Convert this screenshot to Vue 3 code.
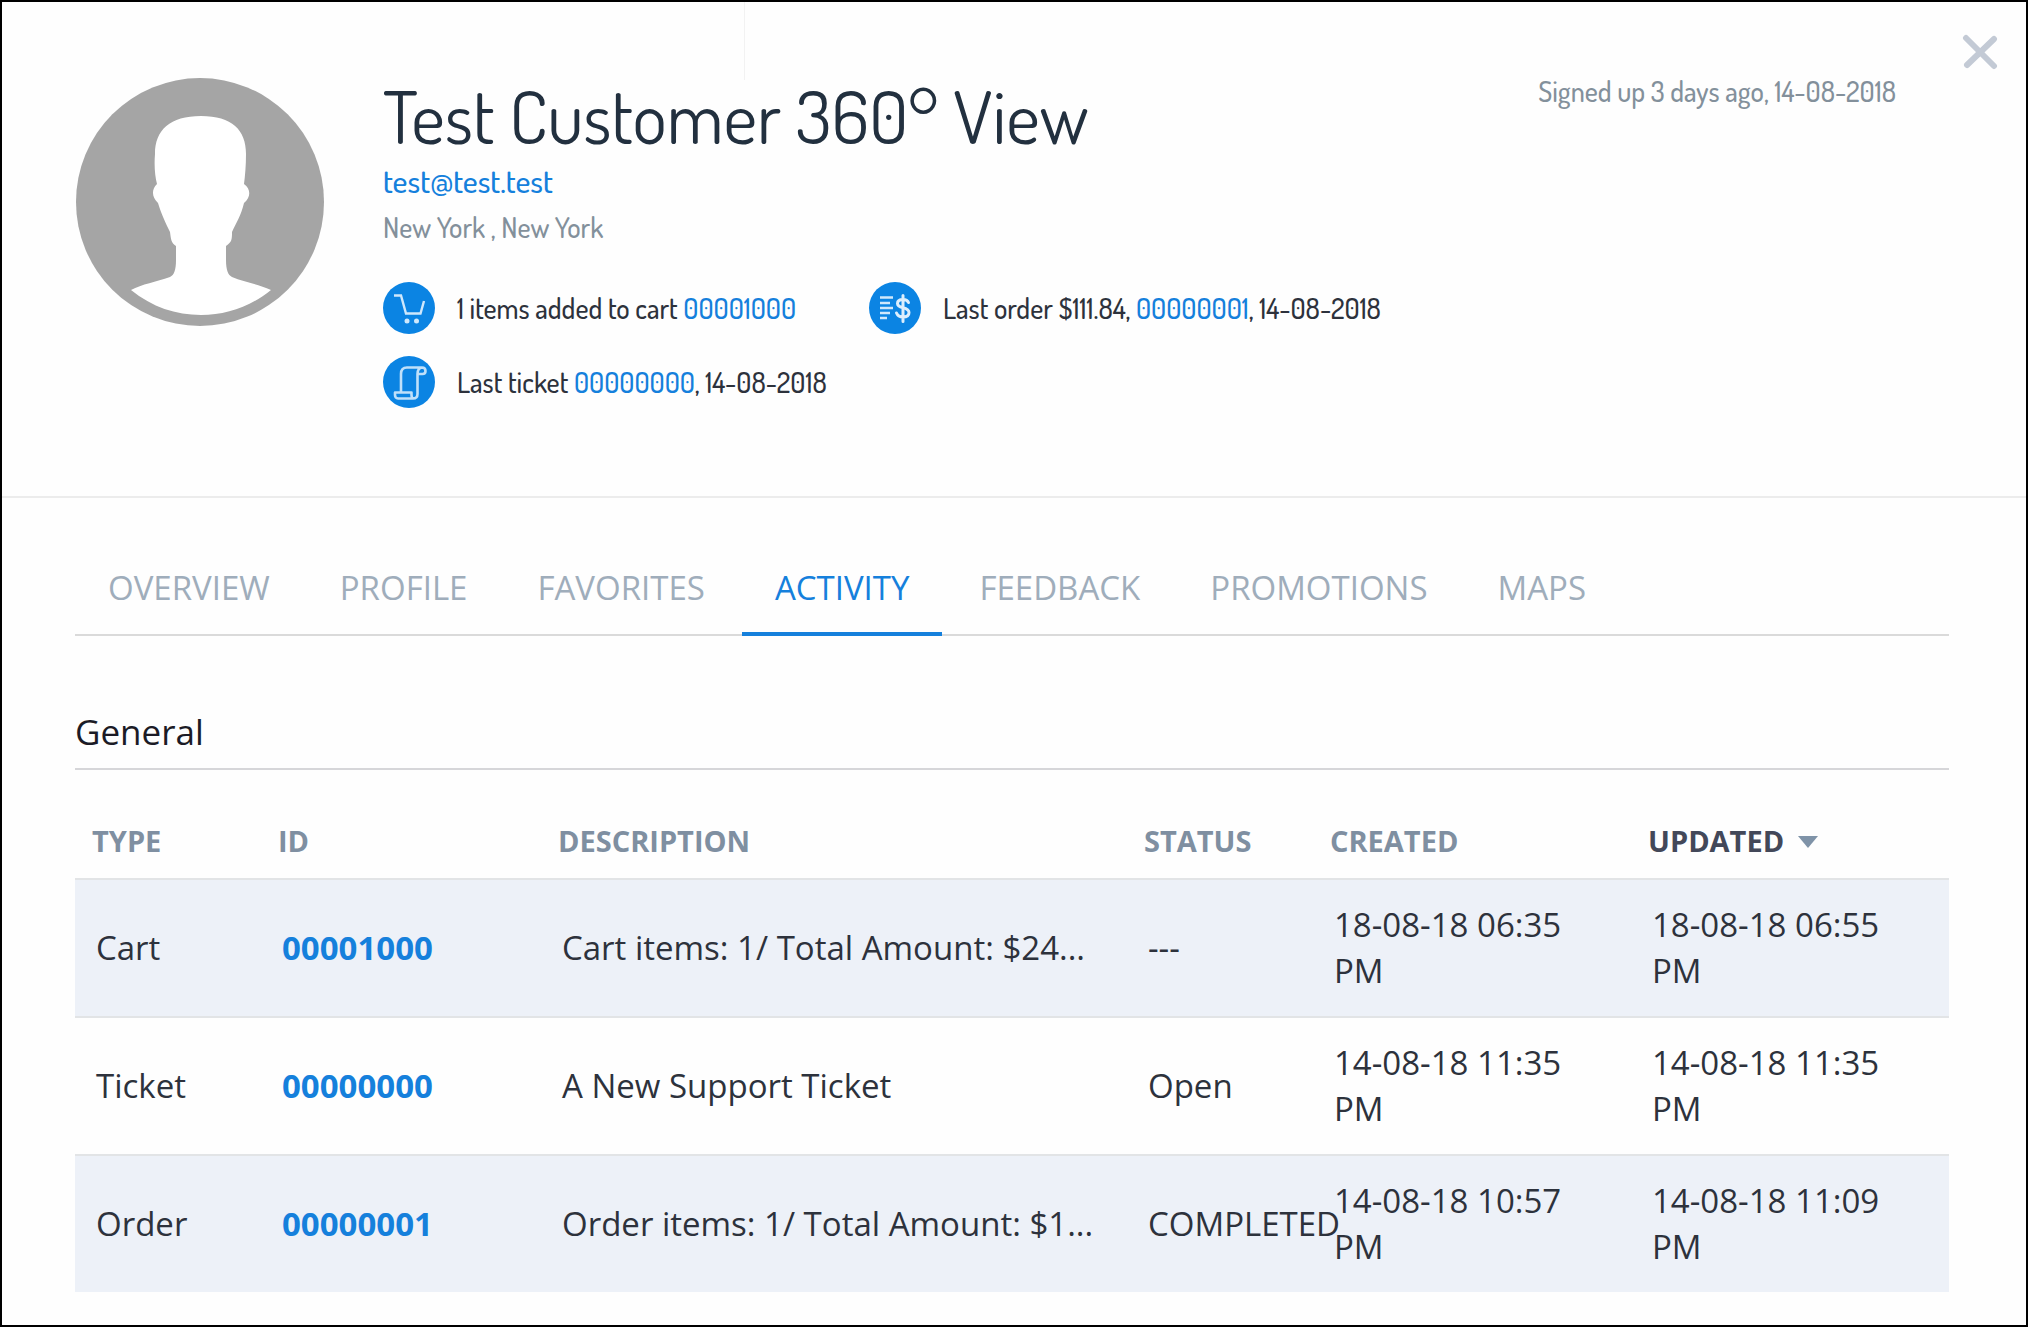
<script setup>
import { ref } from 'vue'

const tabs = ['Overview', 'Profile', 'Favorites', 'Activity', 'Feedback', 'Promotions', 'Maps']
const activeTab = ref('Activity')

const columns = [
  { key: 'type', label: 'Type' },
  { key: 'id', label: 'ID' },
  { key: 'description', label: 'Description' },
  { key: 'status', label: 'Status' },
  { key: 'created', label: 'Created' },
  { key: 'updated', label: 'Updated', sorted: true },
]

const rows = [
  { type: 'Cart', id: '00001000', description: 'Cart items: 1/ Total Amount: $24...', status: '---', created: '18-08-18 06:35 PM', updated: '18-08-18 06:55 PM' },
  { type: 'Ticket', id: '00000000', description: 'A New Support Ticket', status: 'Open', created: '14-08-18 11:35 PM', updated: '14-08-18 11:35 PM' },
  { type: 'Order', id: '00000001', description: 'Order items: 1/ Total Amount: $1...', status: 'COMPLETED', created: '14-08-18 10:57 PM', updated: '14-08-18 11:09 PM' },
]
</script>

<template>
  <main class="dialog">
    <button class="close" type="button" aria-label="Close">
      <svg viewBox="0 0 36 36" width="36" height="36" aria-hidden="true">
        <path d="M4 4 32 32M32 5 5 31" fill="none" stroke="#c3cad5" stroke-width="6" stroke-linecap="round" />
      </svg>
    </button>

    <header class="profile">
      <svg class="avatar" viewBox="0 0 248 248" role="img" aria-label="Customer avatar">
        <circle cx="124" cy="124" r="124" fill="#a5a5a5" />
        <path
          fill="#fff"
          d="M125 38C156 38 170 52 170 76C170 88 169 98 168 106C175 111 175 119 168 125C165 138 160 145 156 154C156 161 156 164 150 168V182C150 192 152 197 156 199C168 204 182 206 195 212C174 229 150 237 125 237C100 237 76 229 55 212C66 206 80 204 94 199C98 197 100 192 100 182V168C95 165 95 161 94 154C90 146 85 135 82 125C76 119 75 112 81 106C79 98 78 88 79 76C79 52 94 38 125 38Z"
        />
      </svg>

      <div class="summary">
        <h1>Test Customer 360° View</h1>
        <a class="email" href="mailto:test@test.test">test@test.test</a>
        <p class="place">New York , New York</p>

        <ul class="facts">
          <li>
            <svg viewBox="0 0 52 52" aria-hidden="true">
              <circle cx="26" cy="26" r="26" fill="#0b84e3" />
              <path d="M11 13.500H18L23 31.500H37.500L41 19" fill="none" stroke="#cfe8fc" stroke-width="2.400" />
              <circle cx="24" cy="39" r="2.500" fill="#cfe8fc" />
              <circle cx="33.500" cy="39" r="2.500" fill="#cfe8fc" />
            </svg>
            <span>1 items added to cart <a href="#cart">00001000</a></span>
          </li>
          <li>
            <svg viewBox="0 0 52 52" aria-hidden="true">
              <circle cx="26" cy="26" r="26" fill="#0b84e3" />
              <path d="M11 15.500H24M11 21H21M11 26H24M11 31H21M11 36H18" fill="none" stroke="#cfe8fc" stroke-width="2.400" />
              <path d="M39.500 20.500C38.500 18 36.500 17.500 34 17.500C30.500 17.500 28.500 19.200 28.500 21.500C28.500 24.300 31 25 34 25.700C37.500 26.500 40 27.500 40 30.500C40 33.500 37.500 35 34 35C30.500 35 28.500 33.500 27.500 31M34 13.500V39.500" fill="none" stroke="#dceefd" stroke-width="3" stroke-linecap="round" />
            </svg>
            <span>Last order $111.84, <a href="#order">00000001</a>, 14-08-2018</span>
          </li>
          <li>
            <svg viewBox="0 0 52 52" aria-hidden="true">
              <circle cx="26" cy="26" r="26" fill="#0b84e3" />
              <path d="M39 11.500H24C20 11.500 18 14 18 18V36.500M39 11.500C36 12 34.500 14 34.500 18V38C34.500 41 33 42.500 30 42.500H15C13 42.500 12 41 12 39V36.500H28.500V39C28.500 41 29.500 42.500 31 42.500M39 11.500C41.500 11.500 42.500 13 42.500 15C42.500 17 41.500 18 39.500 18H34.500" fill="none" stroke="#bfe0fa" stroke-width="2.600" stroke-linejoin="round" />
            </svg>
            <span>Last ticket <a href="#ticket">00000000</a>, 14-08-2018</span>
          </li>
        </ul>
      </div>

      <p class="signed">Signed up 3 days ago, 14-08-2018</p>
    </header>

    <section class="content">
      <nav class="tabs">
        <button
          v-for="tab in tabs"
          :key="tab"
          type="button"
          :class="{ active: tab === activeTab }"
          @click="activeTab = tab"
        >{{ tab }}</button>
      </nav>

      <h2>General</h2>

      <table>
        <colgroup>
          <col v-for="c in columns" :key="c.key" :class="`col-${c.key}`" />
        </colgroup>
        <thead>
          <tr>
            <th v-for="c in columns" :key="c.key" scope="col" :class="{ sorted: c.sorted }">{{ c.label }}</th>
          </tr>
        </thead>
        <tbody>
          <tr v-for="row in rows" :key="row.id">
            <td>{{ row.type }}</td>
            <td><a :href="`#${row.id}`">{{ row.id }}</a></td>
            <td>{{ row.description }}</td>
            <td class="status">{{ row.status }}</td>
            <td>{{ row.created }}</td>
            <td>{{ row.updated }}</td>
          </tr>
        </tbody>
      </table>
    </section>
  </main>
</template>

<style>
body {
  margin: 0;
  background: #fefefe;
}
</style>

<style scoped>
.dialog {
  position: relative;
  box-sizing: border-box;
  min-height: 100vh;
  border: 2px solid #000;
  background: #fefefe;
  color: #2d323c;
  font-family: "Open Sans", "Noto Sans", sans-serif;
  font-size: 33px;
  line-height: 46px;
}

.dialog::before {
  content: "";
  position: absolute;
  top: 0;
  left: 742px;
  width: 1px;
  height: 78px;
  background: #f2f2f2;
}

a {
  color: #1580dc;
  text-decoration: none;
}

button {
  padding: 0;
  border: 0;
  background: none;
  font: inherit;
  cursor: pointer;
}

.close {
  position: absolute;
  top: 32px;
  right: 28px;
  width: 36px;
  height: 36px;
}

.close svg {
  display: block;
}

.profile {
  display: flex;
  align-items: flex-start;
  padding: 73px 130px 88px 74px;
  border-bottom: 2px solid #ececec;
  font-family: Dosis, "Roboto Condensed", "Open Sans", sans-serif;
  font-size: 28px;
  font-weight: 500;
}

.avatar {
  flex: none;
  width: 248px;
  height: 248px;
  margin: 3px 59px 0 0;
}

.summary {
  flex: 1;
}

h1 {
  margin: 0;
  color: #22303f;
  font-size: 73px;
  font-weight: 400;
  line-height: 80px;
}

.email {
  display: block;
  font-size: 32px;
  line-height: 52px;
}

.place {
  margin: 0;
  color: #83909b;
  line-height: 40px;
}

.facts {
  display: grid;
  grid-template-columns: 486px 1fr;
  row-gap: 22px;
  margin: 35px 0 0;
  padding: 0;
  list-style: none;
}

.facts li {
  display: flex;
  align-items: center;
  gap: 22px;
  white-space: nowrap;
}

.facts svg {
  flex: none;
  width: 52px;
  height: 52px;
}

.signed {
  margin: 0;
  color: #83909b;
  line-height: 32px;
}

.content {
  padding: 48px 77px 32px 73px;
}

.tabs {
  display: flex;
  gap: 4px;
  border-bottom: 2px solid #dadada;
}

.tabs button {
  margin-bottom: -2px;
  padding: 19px 33px 21px;
  border-bottom: 4px solid transparent;
  color: #9fadbb;
  text-transform: uppercase;
}

.tabs .active {
  border-color: #1580dc;
  color: #1580dc;
}

h2 {
  margin: 72px 0 0;
  padding-bottom: 12px;
  border-bottom: 2px solid #d6d6d9;
  color: #1b1b26;
  font-size: 35px;
  font-weight: 400;
  line-height: 48px;
}

table {
  width: 100%;
  margin-top: 36px;
  border-collapse: separate;
  border-spacing: 0;
  table-layout: fixed;
}

.col-type,
.col-status { width: 186px; }
.col-id { width: 280px; }
.col-created,
.col-updated { width: 318px; }

th {
  padding: 12px 17px 14px;
  color: #7f8fa1;
  font-size: 29px;
  text-align: left;
  text-transform: uppercase;
}

.sorted {
  color: #434859;
}

.sorted::after {
  content: "";
  display: inline-block;
  margin-left: 14px;
  border: 10px solid transparent;
  border-top: 12px solid #7f93a8;
  border-bottom: 0;
  vertical-align: 4px;
}

td {
  padding: 22px 21px;
  border-top: 2px solid #e2e4e6;
}

tbody tr:nth-child(odd) {
  background: #edf1f8;
}

td a {
  font-weight: 700;
}

.status {
  white-space: nowrap;
}
</style>
